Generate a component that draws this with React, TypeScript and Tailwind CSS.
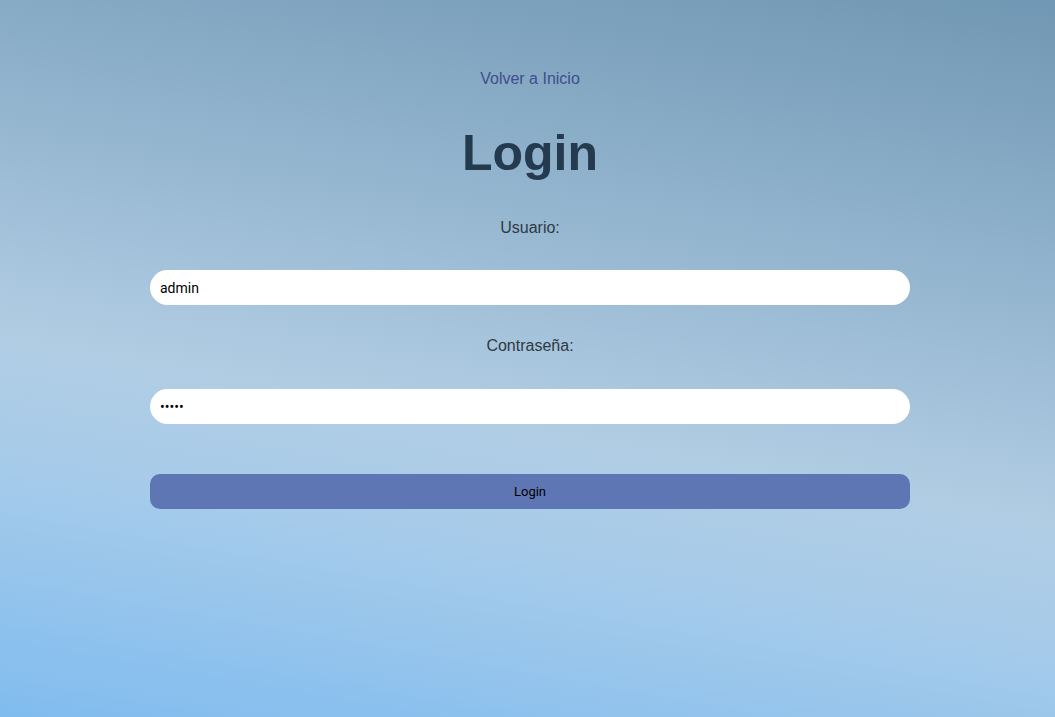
export default function App() {
  return (
    <div
      className="min-h-[717px] w-full bg-[linear-gradient(10deg,#80bcef_0%,#a6cbea_28%,#b1cde4_42%,#8fb1cb_72%,#7097b3_100%)] font-['Liberation_Sans',Arial,sans-serif]"
    >
      <div className="mx-auto flex w-[765px] flex-col items-center pl-[5px] pt-[70px]">
        <a href="#" className="text-base leading-[18px] text-[#3f4e8c]">
          Volver a Inicio
        </a>
        <h1 className="mt-[37px] text-[50px] font-bold leading-[56px] text-[#243a4f]">Login</h1>
        <form className="mt-[38px] flex w-full flex-col items-center">
          <label className="text-base leading-[18px] text-[#2f3a45]">Usuario:</label>
          <input
            type="text"
            defaultValue="admin"
            className="mt-[33px] h-[35px] w-full rounded-full bg-white px-[10px] font-['Roboto',sans-serif] text-[14px] text-black outline-none"
          />
          <label className="mt-[32px] text-base leading-[18px] text-[#2f3a45]">Contraseña:</label>
          <input
            type="password"
            defaultValue="admin"
            className="mt-[34px] h-[35px] w-full rounded-full bg-white px-[10px] font-['Roboto',sans-serif] text-[14px] text-black outline-none"
          />
          <button
            type="button"
            className="mt-[50px] h-[35px] w-full rounded-[10px] bg-[#5f76b4] font-['Roboto',sans-serif] text-[13px] font-normal text-black"
          >
            Login
          </button>
        </form>
      </div>
    </div>
  );
}
